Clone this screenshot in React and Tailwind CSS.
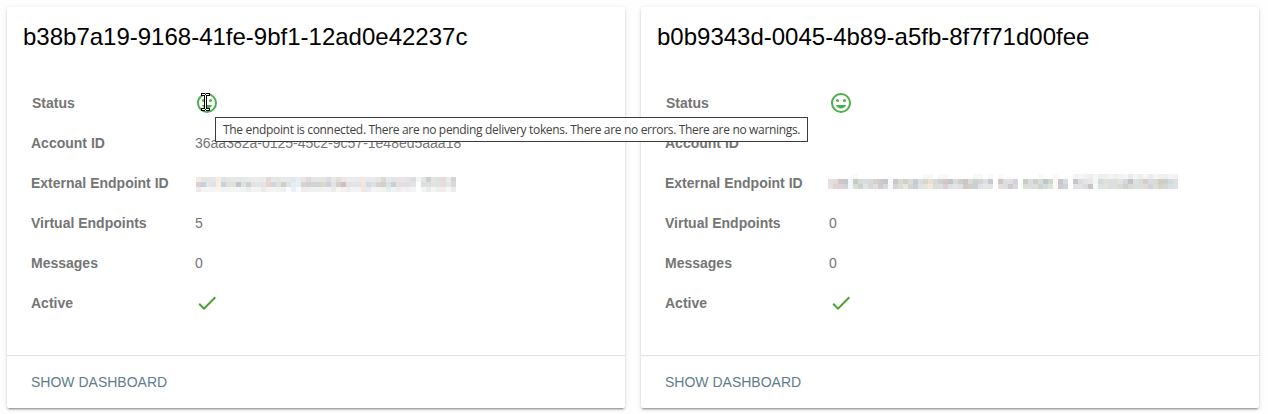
import React from "react";

const CELLS_A = [
  "f1e9e6 e6e3e3 dfe2e5 e4e4e6 f3ece3 dbe0e4 e4e5e3 e6e7e4 e5e6e6 e3e7e6 e8e8e9 ebebed ececed e9e9ed e2d5d7 e3e6e2 dee5e3 e7e8ea e4e6e8 d8e8ee e7ecef e8e2df e0d5d8 e3e3e3 e4e5e3 e1e3e5 d8dadb e6e6e8 dfdbd8 e8e5ea ebebec e9e9ea e8e8ea f1e3e3 e4e6e9 e6e8e8 e3e3e2 d6d6ce e4e5ea e3e1e7 e7e0e7 e5e3e3 e0e0e2 d9dadd f3f3f5 dfe2e5 c9cbcc e2e2e2 dddfde e4d9d5 e7eaec cbd1d6",
  "d8cbca c3cad9 e0e3e4 dedfe4 faeddb c1ced7 dbdedd dbdedb bfbfc4 dbdfe0 cfcccb dfe0df e2e2e7 e1e1e7 e7d0c5 c8d3d9 dcdedb ccccbf dcdfe3 dceef3 e2eef0 d0d1cb d4c9cc cccfd3 ced0cf d9d4c9 cccad8 dfe1e1 d1c9c8 c9bab9 dfdee0 e2e2e6 e1e1e5 f3e0dd d1d8df dbdedb d6cec9 cfcac6 dadedf c4cacf dfdedb e2dae1 e2dae1 e0e1e3 ffffff d9dcdd dadde0 e2e0db dedfdf e7dcd7 e3e5e9 d8d4d2",
  "ebe8e8 f3f4f7 f6f6f6 f5f5f5 faf5ef eff3f4 f2f3f2 f4f5f3 f3f4f5 eff0f0 eceaea f3f3f3 f3f3f5 ebe9e9 f4f1ed f3f4f6 f1f2f0 edf1f1 fafcfd e8f1f4 f9fcfd ecebeb ededed efefef eeeeec f2f1f2 f0f2f2 ebe9e8 f5f6f6 f4eeee ededee f3f3f3 f3f3f4 f3e4df e2ebf0 f4f5f4 f2f2f3 eff1f0 e2ebec f0f1f2 ececef f4f1f4 f1eef1 f3f3f4 ffffff f2f3f3 eae9eb f4f5f2 eeeded f2ebe8 f7f7f8 ebebed",
];

const CELLS_B = [
  "ffffff ffffff ffffff ffffff ffffff f9f9f9 ffffff ffffff ffffff ffffff ffffff ffffff ffffff ffffff ffffff ffffff ffffff ffffff ffffff f8fafa f7f8f8 ffffff f9f9f9 f7f7f7 ffffff ffffff ffffff ffffff ffffff f9f9f4 f8f8f6 ffffff f9f9f9 ffffff f9f9f9 ffffff ffffff ffffff ffffff ffffff ffffff ffffff f9f9f9 ffffff ffffff f9f9f9 ffffff ffffff ffffff f3f3f3 f5f5f5 f2f2f2 ededed f5f5f5 eceff0 eeefee f4f4f4 efefef f2f2f0 f5f5f5 ebebed f4f4f4 ededed f5f5f5 ececec f5f5f5 f1f1ef efefef f4f4f4 f2f2f2",
  "e4dfdd e2dcd8 cec7cb c7c8cc f1f8fb c7ccc2 d7dbd8 dbdce0 d9d9df d4cfcc d1c9c8 c3c9cb f9faf7 c8c7ce dcd9d2 d2d1c9 dbdbd7 c3cccf dadce1 dcd6cd efdfca d3dadd d0cdca d3c6c5 c3c4ca dbdcd9 d0cfc9 cac5cc d6dbd7 c9d3d1 d0d5d4 dfdee6 c9c9d5 ffffff d2c7c6 dedede dfdfe7 d4d4dc ffffff c9cbc5 d9dce1 cfcdc4 d3dedf bec6c8 d0d6d4 fafaf5 cac4cd d9dbe3 ffffff c9c3cb dcdedf e4e4e4 e9e8e9 f5f5f5 d0dcd8 dce1d9 dddddf dcdfe0 e2e2e0 d5d7db c4c4c8 dedfe1 d7dedf dccbc4 dbdae2 d6dad9 d3cbbf cbcfd0 cddbe3 dddfdf",
  "e9e1df e2d3d1 e1d1d6 d5d3da eff7fa d1dfd5 c9d3d0 e2e4e2 d3d7df e1dfda d3c9d0 d9dadf f7f8ef d5d3dd dfdcd4 e5e8e0 d4d7cf c6d0d4 e0e1e5 e3e4dc f1e8d9 d8dfcf d9dce2 dbced3 dce0e8 e3e5e9 dde0e4 d4c9bf d3cdca d0cbd9 dfe2e5 e5e7e6 e4e4e2 ffffff e1e0db dcdde5 d4c8c9 d9dadf ffffff dce0d3 d9dfe1 dcdce1 cdd4cd d2dcdc dfe3d8 fafaf5 d3cad2 cbd5dc ffffff e5e0e4 e3e2e3 dbdbe1 c5c7c7 f7f9f7 dde4dc e2e5df dedee0 dddfdb d7dbd6 cdd1cd d8dad7 dcdfdd dddfdb dddcdb d4d3dc dcded9 d3d5ca d4d8d1 dcdfdc dfe1e2",
];

const Mosaic = ({ rows, className }) => (
  <div className={className}>
    {rows.map((row, y) => (
      <div key={y} className="flex h-[5px]">
        {row.split(" ").map((c, x) => (
          <span key={x} className="h-[5px] w-[5px] shrink-0" style={{ backgroundColor: "#" + c }} />
        ))}
      </div>
    ))}
  </div>
);

const Smile = () => (
  <svg viewBox="0 0 24 24" className="h-6 w-6 fill-[#4caf50]">
    <path d="M12 17.5C14.33 17.5 16.3 16.04 17.11 14H6.89C7.69 16.04 9.67 17.5 12 17.5M8.5 11A1.5 1.5 0 0 0 10 9.5A1.5 1.5 0 0 0 8.5 8A1.5 1.5 0 0 0 7 9.5A1.5 1.5 0 0 0 8.5 11M15.5 11A1.5 1.5 0 0 0 17 9.5A1.5 1.5 0 0 0 15.5 8A1.5 1.5 0 0 0 14 9.5A1.5 1.5 0 0 0 15.5 11M12 20A8 8 0 0 1 4 12A8 8 0 0 1 12 4A8 8 0 0 1 20 12A8 8 0 0 1 12 20M12 2C6.47 2 2 6.5 2 12A10 10 0 0 0 12 22A10 10 0 0 0 22 12A10 10 0 0 0 12 2Z" />
  </svg>
);

const Check = () => (
  <svg viewBox="0 0 24 24" className="h-6 w-6 fill-[#4ca22f]">
    <path d="M21 7L9 19L3.5 13.5L4.91 12.09L9 16.17L19.59 5.59L21 7Z" />
  </svg>
);

const TextCursor = () => (
  <svg viewBox="0 0 9 18" className="absolute top-[93px] left-[201px] h-[18px] w-[9px]" shapeRendering="crispEdges">
    <path fill="#000" d="M0 0H4V1H5V0H9V3H6V15H9V18H5V17H4V18H0V15H3V3H0Z" />
    <path fill="#fff" d="M1 1H4V2H5V1H8V2H5V16H8V17H5V16H4V17H1V16H4V2H1Z" />
  </svg>
);

const Row = ({ label, children }) => (
  <div className="flex h-10 items-center">
    <div className="w-[164px] shrink-0 font-bold">{label}</div>
    <div className="min-w-0 whitespace-nowrap">{children}</div>
  </div>
);

const Card = ({ title, account, externalId, endpoints }) => (
  <section className="flex h-[401px] w-[618px] shrink-0 flex-col rounded-[2px] bg-white shadow-[0_3px_1px_-2px_rgba(0,0,0,0.2),0_2px_2px_0_rgba(0,0,0,0.14),0_1px_5px_0_rgba(0,0,0,0.12)]">
    <h2 className="h-[76px] px-4 pt-[14px] text-[24px] leading-8 text-black">{title}</h2>
    <div className="flex-1 px-6 text-[14px] leading-5 text-[#757575]">
      <Row label={<span className="pl-px">Status</span>}><Smile /></Row>
      <Row label="Account ID">{account}</Row>
      <Row label="External Endpoint ID">{externalId}</Row>
      <Row label="Virtual Endpoints">{endpoints}</Row>
      <Row label="Messages">0</Row>
      <Row label="Active"><Check /></Row>
    </div>
    <footer className="flex h-[53px] items-center border-t border-[#e0e0e0] px-6 text-[14px] text-[#607d8b]">
      <button type="button">SHOW DASHBOARD</button>
    </footer>
  </section>
);

export default function App() {
  return (
    <main className="relative flex h-[414px] w-[1268px] gap-4 overflow-hidden bg-[#fefefe] p-[7px] font-['Liberation_Sans',Arial,sans-serif]">
      <Card
        title="b38b7a19-9168-41fe-9bf1-12ad0e42237c"
        account="36aa382a-0125-45c2-9c57-1e48ed5aaa18"
        externalId={<Mosaic rows={CELLS_A} className="mt-[3px] ml-px opacity-90" />}
        endpoints="5"
      />
      <Card
        title="b0b9343d-0045-4b89-a5fb-8f7f71d00fee"
        account=""
        externalId={<Mosaic rows={CELLS_B} className="-mt-[3px] -ml-px" />}
        endpoints="0"
      />
      <div role="tooltip" className="absolute top-[117px] left-[215px] flex h-[25px] w-[593px] items-center border border-[#3c3c3c] bg-white pl-[7px] text-[12px] tracking-[-0.325px] whitespace-nowrap text-[#424242] font-['Open_Sans','Noto_Sans',sans-serif]">
        The endpoint is connected. There are no pending delivery tokens. There are no errors. There are no warnings.
      </div>
      <TextCursor />
    </main>
  );
}
